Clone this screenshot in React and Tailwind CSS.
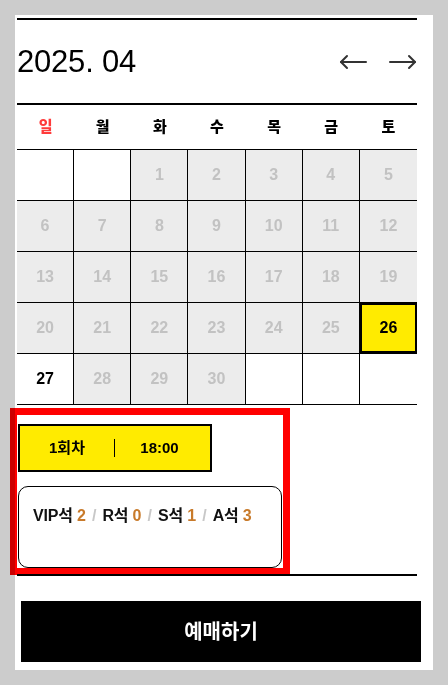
const days = [
    null, null, 1, 2, 3, 4, 5,
    6, 7, 8, 9, 10, 11, 12,
    13, 14, 15, 16, 17, 18, 19,
    20, 21, 22, 23, 24, 25, 26,
    27, 28, 29, 30, null, null, null,
];

const weekdays = ['일', '월', '화', '수', '목', '금', '토'];

const seats = [
    { label: 'VIP석', count: 2 },
    { label: 'R석', count: 0 },
    { label: 'S석', count: 1 },
    { label: 'A석', count: 3 },
];

const ko = { fontFamily: '"Liberation Sans", "Noto Sans CJK KR", sans-serif' };

function Arrow({ dir }) {
    return (
        <svg width="28" height="16" viewBox="0 0 28 16" fill="none" stroke="#333" strokeWidth="2" strokeLinecap="round" strokeLinejoin="round">
            {dir === 'left' ? (
                <>
                    <path d="M2 8H27" />
                    <path d="M8 2L2 8L8 14" />
                </>
            ) : (
                <>
                    <path d="M1 8H26" />
                    <path d="M20 2L26 8L20 14" />
                </>
            )}
        </svg>
    );
}

export default function App() {
    return (
        <div className="min-h-[685px] bg-[#cccccc] pt-[15px] pl-[15px]" style={ko}>
            <div className="h-[655px] w-[418px] bg-white pl-[2px] pt-[3px]">
                <div className="w-[400px]">
                    <div className="flex h-[87px] items-center justify-between border-y-2 border-black">
                        <h1 className="text-[31px] leading-none tracking-[-0.2px] text-black">2025. 04</h1>
                        <div className="flex items-center gap-[22px]">
                            <Arrow dir="left" />
                            <Arrow dir="right" />
                        </div>
                    </div>

                    <div className="grid h-[44px] grid-cols-7 items-center text-center text-[15px] font-black">
                        {weekdays.map((d, i) => (
                            <span key={d} className={i === 0 ? 'text-[#ff3b3b]' : 'text-black'}>{d}</span>
                        ))}
                    </div>

                    <div className="grid grid-cols-7 border-t border-black">
                        {days.map((day, i) => {
                            const last = i % 7 === 6;
                            const selected = day === 26;
                            const open = day === 27;
                            let tone = 'bg-[#ececec] text-[#c2c2c2]';
                            if (day === null || open) tone = 'bg-white text-black';
                            if (selected) tone = 'bg-[#ffeb00] text-black shadow-[inset_0_0_0_2px_#000]';
                            return (
                                <div
                                    key={i}
                                    className={`flex h-[51px] items-center justify-center border-b border-black text-[16px] font-bold ${last ? '' : 'border-r'} ${tone}`}
                                >
                                    {day}
                                </div>
                            );
                        })}
                    </div>

                    <div className="border-b-2 border-black pt-[10px] pb-[6px]">
                        <div className="w-[266px] px-px pt-[9px] outline-[7px] outline-solid outline-[#ff0000] mix-blend-multiply">
                            <button className="flex h-12 w-[194px] items-center border-2 border-black bg-[#ffeb00] text-[15px] font-bold text-black">
                                <span className="w-[94px] text-center">1회차</span>
                                <span className="h-[18px] w-px bg-black" />
                                <span className="flex-1 pr-[6px] text-center">18:00</span>
                            </button>
                            <div className="mt-[14px] h-[82px] rounded-[10px] border border-black px-[14px] pt-[17px] text-[16px] font-bold tracking-[-0.2px] text-[#111]">
                                {seats.map((s, i) => (
                                    <span key={s.label}>
                                        {s.label} <span className="text-[#c87a2a]">{s.count}</span>
                                        {i < seats.length - 1 && <span className="px-[2px] text-[#c8c8c8]"> / </span>}
                                    </span>
                                ))}
                            </div>
                        </div>
                    </div>
                </div>

                <button className="mt-[25px] ml-[4px] flex h-[61px] w-[400px] items-center justify-center bg-black text-[20px] font-bold text-white">
                    예매하기
                </button>
            </div>
        </div>
    );
}
